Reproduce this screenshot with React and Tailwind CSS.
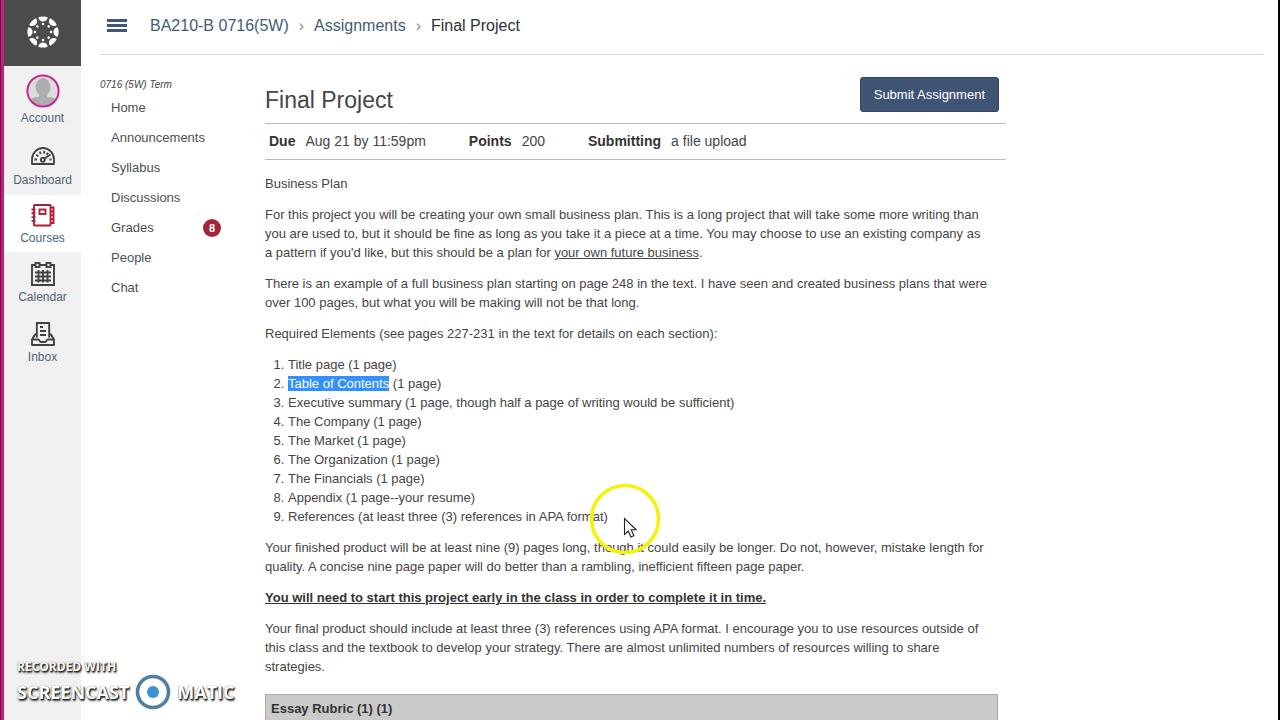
import React from "react";

const courseLinks = [
  { label: "Home" },
  { label: "Announcements" },
  { label: "Syllabus" },
  { label: "Discussions" },
  { label: "Grades", count: 8 },
  { label: "People" },
  { label: "Chat" },
];

const details = [
  { term: "Due", value: "Aug 21 by 11:59pm" },
  { term: "Points", value: "200" },
  { term: "Submitting", value: "a file upload" },
];

function CanvasLogo() {
  return (
    <svg viewBox="-16 -16 32 32" className="h-8 w-8" fill="#fff" aria-hidden="true">
      {[0, 45, 90, 135, 180, 225, 270, 315].map((deg) => (
        <g key={deg} transform={`rotate(${deg})`}>
          <path d="M-4.7 -14.7 Q0 -16.5 4.7 -14.7 C4.2 -9 -4.2 -9 -4.7 -14.7Z" />
          <circle cx="0" cy="-8" r="1.3" />
        </g>
      ))}
    </svg>
  );
}

function Avatar() {
  return (
    <svg viewBox="0 0 34 34" className="h-[34px] w-[34px]" aria-hidden="true">
      <defs>
        <clipPath id="avatarClip">
          <circle cx="17" cy="17" r="15" />
        </clipPath>
      </defs>
      <circle cx="17" cy="17" r="15" fill="#dcdcdc" />
      <g clipPath="url(#avatarClip)" fill="#adadad">
        <ellipse cx="17" cy="13" rx="7.5" ry="9" />
        <path d="M13 19h8v4c5 0 9 1 11 5v6H2v-6c2-4 6-5 11-5z" />
      </g>
      <circle cx="17" cy="17" r="15.6" fill="none" stroke="#c5288c" strokeWidth="2" />
    </svg>
  );
}

function DashboardIcon() {
  return (
    <svg viewBox="0 0 26 20" className="h-5 w-[26px]" fill="none" stroke="#3f4142" strokeWidth="1.8" aria-hidden="true">
      <path d="M2 18v-4.500C2 7 7 2 13 2s11 5 11 11.500V18z" strokeLinejoin="round" />
      <path d="M4.500 13.500h2.500M6.300 8.800l2 1.400M9.700 5.600l1.100 2.200M14.300 5l-.4 2.500M18 6.700l-1.500 2M19.500 13.500h2M14.500 12.500l6-4" />
      <circle cx="12.800" cy="13.800" r="2" />
    </svg>
  );
}

function CoursesIcon() {
  return (
    <svg viewBox="0 0 24 24" className="h-6 w-6" fill="none" stroke="#ab2138" strokeWidth="1.900" aria-hidden="true">
      <rect x="3" y="2" width="16.500" height="20.500" rx="0.500" />
      <rect x="8.500" y="6.500" width="6" height="4.500" />
      <path d="M.5 6.500h4M.5 10.300h4M.5 14.100h4M.5 17.900h4M19.500 4.500h3v15.500h-3M19.500 8.500h3M19.500 12.300h3M19.500 16.200h3" />
    </svg>
  );
}

function CalendarIcon() {
  return (
    <svg viewBox="0 0 24 24" className="h-6 w-6" fill="none" stroke="#3f4142" strokeWidth="1.900" aria-hidden="true">
      <path d="M4.500 3H1v20h22V3h-3.500M8.500 3h7" />
      <rect x="4.500" y="1" width="4" height="4" />
      <rect x="15.500" y="1" width="4" height="4" />
      <path d="M4 10.500h16M4 14.500h16M4 18.500h16M7.500 8v12.500M12 8v12.500M16.500 8v12.500" />
    </svg>
  );
}

function InboxIcon() {
  return (
    <svg viewBox="0 0 24 24" className="h-6 w-6" fill="none" stroke="#3f4142" strokeWidth="1.900" strokeLinejoin="round" aria-hidden="true">
      <path d="M5.800 15.500V1h12.400v14.500" />
      <path d="M9 5h3M9 9h6M9 13h6" />
      <path d="M5.500 12.500H4L1 17.500V23h22v-5.500l-3-5H18.500" />
      <path d="M1 17.500h6.500l2 2.500h5l2-2.500H23" />
    </svg>
  );
}

function NavItem({ label, icon, className = "" }) {
  return (
    <a
      href="#"
      className={`flex flex-col items-center text-[12px] leading-4 text-[#4c6475] ${className}`}
    >
      {icon}
      {label}
    </a>
  );
}

function GlobalNav() {
  return (
    <nav className="w-20 shrink-0 border-l-3 border-[#c41c80] bg-[#f1f1f2]">
      <a href="#" aria-label="Canvas" className="flex h-[66px] items-center justify-center bg-[#4c4b4b] pb-[2px]">
        <CanvasLogo />
      </a>
      <NavItem label="Account" icon={<Avatar />} className="h-[68px] gap-[2px] pt-2" />
      <NavItem label="Dashboard" icon={<DashboardIcon />} className="h-[61px] gap-[6px] pt-3" />
      <NavItem label="Courses" icon={<CoursesIcon />} className="h-[57px] gap-[3px] bg-white pt-2" />
      <NavItem label="Calendar" icon={<CalendarIcon />} className="h-[60px] gap-[3px] pt-[10px]" />
      <NavItem label="Inbox" icon={<InboxIcon />} className="h-[60px] gap-[3px] pt-[10px]" />
    </nav>
  );
}

function Breadcrumbs() {
  return (
    <header className="mr-[15px] ml-[19px] flex h-[55px] items-center gap-[23px] border-b border-[#d6d6d6] pb-[3px] pl-[7px]">
      <button type="button" aria-label="Toggle course menu" className="flex w-5 flex-col gap-[2px]">
        <span className="h-[3px] bg-[#3f5676]" />
        <span className="h-[3px] bg-[#3f5676]" />
        <span className="h-[3px] bg-[#3f5676]" />
      </button>
      <nav className="flex items-center gap-[10px] text-[16px] leading-5 text-[#435c72]">
        <a href="#">BA210-B 0716(5W)</a>
        <span className="text-[#8b8b8b]">›</span>
        <a href="#">Assignments</a>
        <span className="text-[#8b8b8b]">›</span>
        <span className="text-[#2d3135]">Final Project</span>
      </nav>
    </header>
  );
}

function CourseMenu() {
  return (
    <aside className="w-[165px] shrink-0 pt-[23px]">
      <p className="text-[10px] leading-[14px] text-[#444] italic">0716 (5W) Term</p>
      <ul className="pt-px text-[13px] text-[#4d5052]">
        {courseLinks.map((link) => (
          <li key={link.label}>
            <a href="#" className="flex h-[30px] items-center justify-between pr-11 pl-[11px]">
              {link.label}
              {link.count && (
                <span className="flex h-[18px] w-[18px] items-center justify-center rounded-full bg-[#a3243b] text-[11px] font-bold text-white">
                  {link.count}
                </span>
              )}
            </a>
          </li>
        ))}
      </ul>
    </aside>
  );
}

function Assignment() {
  return (
    <main className="w-full max-w-[741px] min-w-0 text-[#454545]">
      <div className="flex items-start justify-between pt-[22px] pr-[7px]">
        <h1 className="pt-[9px] text-[23px] leading-7">Final Project</h1>
        <button
          type="button"
          className="h-[35px] rounded-[3px] border border-[#2f4562] bg-[#3f5475] px-[13px] text-[13px] text-white"
        >
          Submit Assignment
        </button>
      </div>

      <dl className="mt-[9px] flex h-[37px] items-center gap-[43px] border-y border-[#bcbcbc] pl-1 text-[14px]">
        {details.map((d) => (
          <div key={d.term} className="flex gap-[10px]">
            <dt className="font-bold text-[#333]">{d.term}</dt>
            <dd>{d.value}</dd>
          </div>
        ))}
      </dl>

      <div className="flex flex-col gap-3 pt-[14px] text-[13px] leading-[19px]">
        <p>Business Plan</p>
        <p>
          For this project you will be creating your own small business plan. This is a long project that will take
          some more writing than
          <br />
          you are used to, but it should be fine as long as you take it a piece at a time. You may choose to use an
          existing company as
          <br />a pattern if you'd like, but this should be a plan for <u>your own future business</u>.
        </p>
        <p>
          There is an example of a full business plan starting on page 248 in the text. I have seen and created
          business plans that were
          <br />
          over 100 pages, but what you will be making will not be that long.
        </p>
        <p>Required Elements (see pages 227-231 in the text for details on each section):</p>
        <ol className="list-decimal pl-[23px]">
          <li>Title page (1 page)</li>
          <li>
            <mark className="bg-[#3390ff] text-white">Table of Contents</mark> (1 page)
          </li>
          <li>Executive summary (1 page, though half a page of writing would be sufficient)</li>
          <li>The Company (1 page)</li>
          <li>The Market (1 page)</li>
          <li>The Organization (1 page)</li>
          <li>The Financials (1 page)</li>
          <li>Appendix (1 page--your resume)</li>
          <li>References (at least three (3) references in APA format)</li>
        </ol>
        <p>
          Your finished product will be at least nine (9) pages long, though it could easily be longer. Do not,
          however, mistake length for
          <br />
          quality. A concise nine page paper will do better than a rambling, inefficient fifteen page paper.
        </p>
        <p className="font-bold text-[#333] underline">
          You will need to start this project early in the class in order to complete it in time.
        </p>
        <p>
          Your final product should include at least three (3) references using APA format. I encourage you to use
          resources outside of
          <br />
          this class and the textbook to develop your strategy. There are almost unlimited numbers of resources
          willing to share
          <br />
          strategies.
        </p>
      </div>

      <h2 className="mt-[18px] mr-2 border border-[#a9a9a9] bg-[#cacaca] px-[5px] py-1 text-[13px] leading-5 font-bold text-[#333]">
        Essay Rubric (1) (1)
      </h2>
    </main>
  );
}

function Pointer() {
  return (
    <svg viewBox="0 0 72 72" className="pointer-events-none absolute top-[483px] left-[588px] h-[72px] w-[72px]" aria-hidden="true">
      <circle cx="36" cy="36" r="33.500" fill="none" stroke="#f3f30c" strokeWidth="3.600" />
      <path d="M35.500 35.500v16l3.700-3.500 2.700 6 3-1.300-2.700-5.900h5z" fill="#fff" stroke="#222" strokeWidth="1.100" />
    </svg>
  );
}

function Watermark() {
  return (
    <div className="pointer-events-none absolute bottom-[10px] left-4 font-['Open_Sans',sans-serif] font-bold text-white [text-shadow:1px_1px_1px_#222,1px_2px_2px_#444,0_0_1px_#555]">
      <div className="text-[12px] leading-[14px]">RECORDED WITH</div>
      <div className="flex items-center gap-[6px] text-[18px] leading-9">
        SCREENCAST
        <svg viewBox="0 0 36 36" className="h-9 w-9" aria-hidden="true">
          <circle cx="18" cy="18" r="15.500" fill="#fff" stroke="#4f7fa5" strokeWidth="3.600" />
          <circle cx="18" cy="18" r="6" fill="#3d92d6" />
        </svg>
        MATIC
      </div>
    </div>
  );
}

export default function App() {
  return (
    <div className="relative flex h-screen overflow-hidden border-r-2 border-l border-r-black border-l-[#5c0b3b] bg-white font-['Liberation_Sans',Arial,sans-serif]">
      <GlobalNav />
      <div className="min-w-0 flex-1">
        <Breadcrumbs />
        <div className="flex pl-[19px]">
          <CourseMenu />
          <Assignment />
        </div>
      </div>
      <Pointer />
      <Watermark />
    </div>
  );
}
